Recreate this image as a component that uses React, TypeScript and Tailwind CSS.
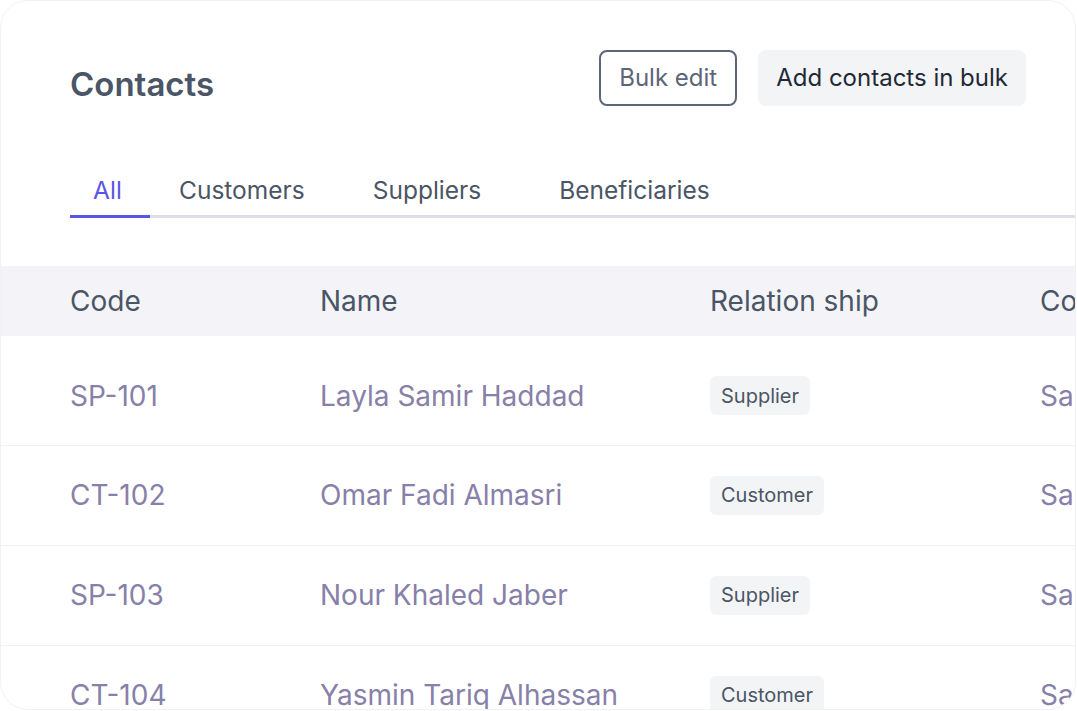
import React from "react";

type Contact = { code: string; name: string; relation: "Supplier" | "Customer"; country: string };

const contacts: Contact[] = [
  { code: "SP-101", name: "Layla Samir Haddad", relation: "Supplier", country: "Saudi Arabia" },
  { code: "CT-102", name: "Omar Fadi Almasri", relation: "Customer", country: "Saudi Arabia" },
  { code: "SP-103", name: "Nour Khaled Jaber", relation: "Supplier", country: "Saudi Arabia" },
  { code: "CT-104", name: "Yasmin Tariq Alhassan", relation: "Customer", country: "Saudi Arabia" },
];

const tabs = [
  { label: "All", className: "w-[80px] pr-[5px]" },
  { label: "Customers", className: "ml-[5px] px-6" },
  { label: "Suppliers", className: "ml-5 px-6" },
  { label: "Beneficiaries", className: "ml-[30px] px-6" },
];

function Tabs() {
  return (
    <div className="mt-[69px] flex border-b-[3px] border-[#dedee5]">
      {tabs.map((tab, i) => (
        <button
          key={tab.label}
          className={`-mb-[3px] pb-[10px] text-center text-[24.5px] leading-[30px] ${tab.className} ${
            i === 0 ? "border-b-[3px] border-[#5a55e6] text-[#5a55e6]" : "border-b-[3px] border-transparent text-[#4a5565]"
          }`}
        >
          {tab.label}
        </button>
      ))}
    </div>
  );
}

function Badge({ children }: { children: React.ReactNode }) {
  return (
    <div className="flex">
      <span className="flex h-[39px] items-center rounded-md bg-[#f3f4f6] px-[11px] text-[20px] text-[#4a5565]">
        {children}
      </span>
    </div>
  );
}

export default function App() {
  return (
    <div className="h-[711px] w-[1077px] bg-white" style={{ fontFamily: "Inter, 'Noto Sans', sans-serif" }}>
      <div className="h-[710px] w-[1076px] overflow-hidden rounded-[28px] border border-[#f2f2f4] bg-white">
        <div className="pl-[69px] pr-[49px]">
          <header className="flex items-start justify-between pt-[49px]">
            <h1 className="mt-[14px] text-[33px] font-semibold leading-[40px] text-[#4a5565]">Contacts</h1>
            <div className="flex gap-[21px]">
              <button className="h-[56px] rounded-lg border-2 border-[#5d6579] px-[18px] text-[24px] text-[#5d6579]">
                Bulk edit
              </button>
              <button className="h-[56px] rounded-lg bg-[#f3f4f6] px-[18px] text-[24px] text-[#1f2937]">
                Add contacts in bulk
              </button>
            </div>
          </header>
        </div>
        <div className="pl-[69px]">
          <Tabs />
        </div>

        <table className="mt-[48px] w-[1300px] table-fixed border-collapse text-left">
          <colgroup>
            <col className="w-[319px]" />
            <col className="w-[390px]" />
            <col className="w-[330px]" />
            <col className="w-[261px]" />
          </colgroup>
          <thead>
            <tr className="h-[70px] bg-[#f4f4f8] text-[28px] text-[#4a5565]">
              <th className="pl-[69px] font-normal">Code</th>
              <th className="font-normal">Name</th>
              <th className="font-normal">Relation ship</th>
              <th className="font-normal">Country</th>
            </tr>
          </thead>
          <tbody>
            {contacts.map((c, i) => {
              const pad = i === 0 ? "pt-[11px]" : "pt-0";
              return (
                <tr
                  key={c.code}
                  className={`text-[28px] text-[#8780a9] ${i === 0 ? "h-[109px]" : "h-[100px] border-t border-[#f1f1f5]"}`}
                >
                  <td className={`pl-[69px] ${pad}`}>{c.code}</td>
                  <td className={pad}>{c.name}</td>
                  <td className={pad}>
                    <Badge>{c.relation}</Badge>
                  </td>
                  <td className={pad}>{c.country}</td>
                </tr>
              );
            })}
          </tbody>
        </table>
      </div>
    </div>
  );
}
